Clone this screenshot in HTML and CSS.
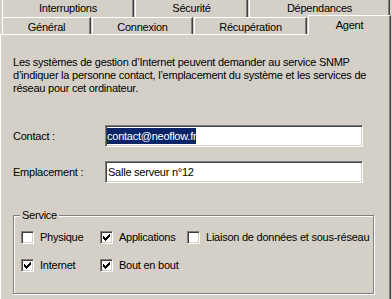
FILE: index.html
```html
<!DOCTYPE html>
<html lang="fr">
<head>
<meta charset="utf-8">
<title>Propriétés SNMP - Agent</title>
<link rel="stylesheet" href="styles.css">
</head>
<body>
<div class="dialog">
  <div class="tabrow row1">
    <div class="tab t-int">Interruptions</div>
    <div class="tab t-sec">Sécurité</div>
    <div class="tab t-dep">Dépendances</div>
  </div>
  <div class="tabrow row2">
    <div class="tab t-gen">Général</div>
    <div class="tab t-con">Connexion</div>
    <div class="tab t-rec">Récupération</div>
    <div class="tab t-agent active">Agent</div>
  </div>
  <div class="panel">
    <p class="desc">Les systèmes de gestion d’Internet peuvent demander au service SNMP<br>d’indiquer la personne contact, l’emplacement du système et les services de<br>réseau pour cet ordinateur.</p>
    <div class="field-row first">
      <span class="label">Contact :</span>
      <div class="field"><span class="sel">contact@neoflow.fr</span></div>
    </div>
    <div class="field-row">
      <span class="label">Emplacement :</span>
      <div class="field"><span class="val">Salle serveur n°12</span></div>
    </div>
    <div class="group">
      <span class="legend">Service</span>
      <div class="checks">
        <div class="check"><span class="box"></span>Physique</div>
        <div class="check"><span class="box"><svg width="7" height="7" viewBox="0 0 7 7"><path d="M6 0h1v1H6zM5 1h2v1H5zM0 2h1v1H0zM4 2h3v1H4zM0 3h2v1H0zM3 3h3v1H3zM0 4h5v1H0zM1 5h3v1H1zM2 6h1v1H2z" fill="#000"/></svg></span>Applications</div>
        <div class="check"><span class="box"></span>Liaison de données et sous-réseau</div>
        <div class="check"><span class="box"><svg width="7" height="7" viewBox="0 0 7 7"><path d="M6 0h1v1H6zM5 1h2v1H5zM0 2h1v1H0zM4 2h3v1H4zM0 3h2v1H0zM3 3h3v1H3zM0 4h5v1H0zM1 5h3v1H1zM2 6h1v1H2z" fill="#000"/></svg></span>Internet</div>
        <div class="check"><span class="box"><svg width="7" height="7" viewBox="0 0 7 7"><path d="M6 0h1v1H6zM5 1h2v1H5zM0 2h1v1H0zM4 2h3v1H4zM0 3h2v1H0zM3 3h3v1H3zM0 4h5v1H0zM1 5h3v1H1zM2 6h1v1H2z" fill="#000"/></svg></span>Bout en bout</div>
      </div>
    </div>
  </div>
</div>
</body>
</html>
```
FILE: styles.css
```css
html, body {
  margin: 0;
  padding: 0;
}
body {
  background: #d4d0c8;
  font-family: "Liberation Sans", Arial, sans-serif;
  font-size: 11px;
  line-height: 13px;
  letter-spacing: -0.24px;
  color: #000;
  width: 392px;
  height: 299px;
  overflow: hidden;
}
.dialog {
  width: 392px;
}
.tabrow {
  display: flex;
  height: 17px;
  padding-left: 2px;
  gap: 1px;
}
.tab {
  box-sizing: border-box;
  height: 17px;
  text-align: center;
  white-space: nowrap;
  border-left: 1px solid #fff;
  border-right: 1px solid #404040;
  box-shadow: inset -1px 0 0 #808080;
  background: #d4d0c8;
}
.row1 .tab {
  padding-top: 2px;
}
.row2 .tab {
  border-top: 1px solid #fff;
  padding-top: 3px;
}
.t-int { width: 132px; }
.t-sec { width: 113px; }
.t-dep { width: 141px; }
.t-gen { width: 89px; }
.t-con { width: 101px; }
.t-rec { width: 113px; }
.row2 .t-agent {
  width: 83px;
  height: 20px;
  position: relative;
  top: -2px;
  z-index: 1;
  padding-top: 3px;
  align-self: flex-start;
}
.panel {
  box-sizing: border-box;
  width: 391px;
  height: 265px;
  border-top: 1px solid #fff;
  border-left: 1px solid #fff;
  border-right: 1px solid #404040;
  box-shadow: inset -1px 0 0 #808080;
  padding: 21px 0 0 12px;
}
.desc {
  margin: 0;
  white-space: nowrap;
}
.field-row {
  display: flex;
  align-items: center;
  margin-top: 14px;
}
.field-row.first {
  margin-top: 30px;
}
.label {
  width: 92px;
}
.field {
  box-sizing: border-box;
  width: 258px;
  height: 22px;
  background: #fff;
  border-top: 1px solid #808080;
  border-left: 1px solid #808080;
  border-bottom: 1px solid #fff;
  border-right: 1px solid #fff;
  box-shadow: inset 1px 1px 0 #404040, inset -1px -1px 0 #d4d0c8;
  padding: 2px 0 0 1px;
  display: flex;
  align-items: flex-start;
}
.sel {
  background: #0a246a;
  color: #fff;
  line-height: 16px;
}
.val {
  line-height: 16px;
  padding-left: 1px;
}
.group {
  position: relative;
  box-sizing: border-box;
  width: 361px;
  height: 79px;
  margin-top: 32px;
  border: 1px solid #808080;
  box-shadow: inset 1px 1px 0 #fff, 1px 1px 0 #fff;
  padding: 15px 0 0 7px;
}
.legend {
  position: absolute;
  top: -7px;
  left: 6px;
  padding: 0 2px;
  background: #d4d0c8;
}
.checks {
  display: grid;
  grid-template-columns: 79px 87px auto;
  row-gap: 15px;
}
.check {
  display: flex;
  align-items: center;
  height: 13px;
  gap: 6px;
  white-space: nowrap;
}
.box {
  box-sizing: border-box;
  width: 13px;
  height: 13px;
  flex: none;
  background: #fff;
  border-top: 1px solid #808080;
  border-left: 1px solid #808080;
  border-bottom: 1px solid #fff;
  border-right: 1px solid #fff;
  box-shadow: inset 1px 1px 0 #404040, inset -1px -1px 0 #d4d0c8;
  padding: 2px 0 0 2px;
}
.box svg {
  display: block;
}
```
